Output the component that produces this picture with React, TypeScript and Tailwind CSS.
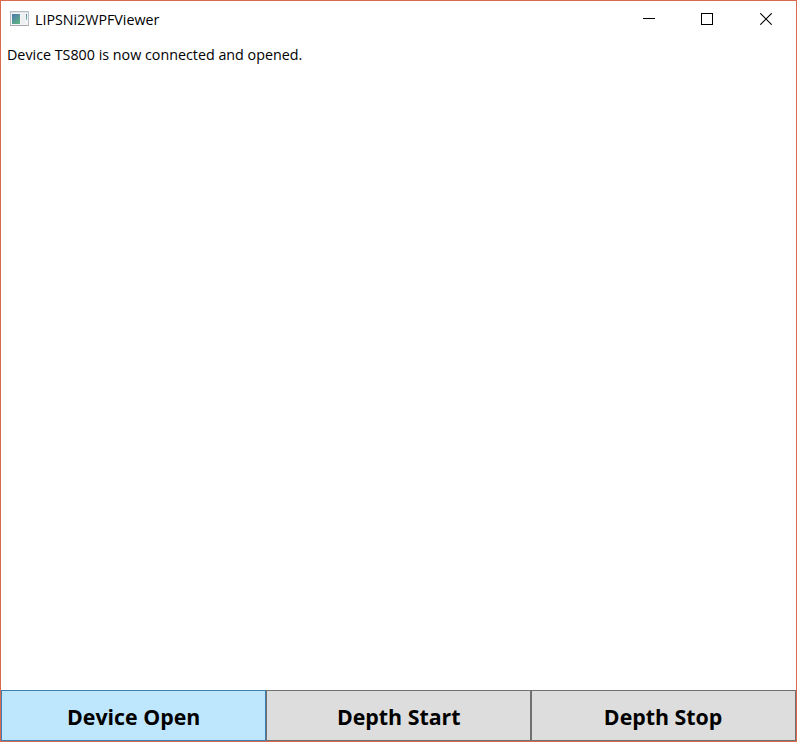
function AppIcon() {
  return (
    <svg width="19" height="16" viewBox="0 0 19 16" shapeRendering="crispEdges" aria-hidden="true">
      <defs>
        <linearGradient id="pane" x1="0" y1="0" x2="0.6" y2="1">
          <stop offset="0" stopColor="#4a78b0" />
          <stop offset="1" stopColor="#5fae86" />
        </linearGradient>
        <linearGradient id="bar" x1="0" y1="0" x2="0" y2="1">
          <stop offset="0" stopColor="#4a78b0" />
          <stop offset="1" stopColor="#7fbf9c" />
        </linearGradient>
      </defs>
      <rect x="0.5" y="0.5" width="18" height="14" fill="#f4f5f6" stroke="#b9bec4" />
      <rect x="0" y="14" width="19" height="1" fill="#a6a9ad" />
      <rect x="1" y="1" width="17" height="1" fill="#dfe2e6" />
      <rect x="2" y="3" width="8" height="10" fill="url(#pane)" />
      <rect x="11" y="3" width="4" height="10" fill="#eceeef" />
      <rect x="16" y="3" width="1" height="6" fill="url(#bar)" />
    </svg>
  );
}

function TitleBar() {
  return (
    <header className="flex h-[36px] items-center justify-between pl-[9px] pr-[24px]">
      <div className="flex items-center gap-[6px]">
        <AppIcon />
        <h1 className="origin-left scale-x-[0.95] whitespace-nowrap text-[15px] leading-5">LIPSNi2WPFViewer</h1>
      </div>
      <div className="flex items-center">
        <button aria-label="Minimize" className="mr-[46px]">
          <svg className="block" width="12" height="12" shapeRendering="crispEdges">
            <rect y="5" width="12" height="1" />
          </svg>
        </button>
        <button aria-label="Maximize" className="mr-[47px]">
          <svg className="block" width="12" height="12" shapeRendering="crispEdges">
            <rect x="0.5" y="0.5" width="11" height="11" fill="none" stroke="black" />
          </svg>
        </button>
        <button aria-label="Close">
          <svg className="block" width="12" height="12">
            <path d="M0.3 0.3 11.7 11.7M11.7 0.3 0.3 11.7" stroke="black" strokeWidth="1.1" />
          </svg>
        </button>
      </div>
    </header>
  );
}

const actions = [
  { label: "Device Open", tone: "border-[#3c7fb1] bg-[#bee6fd]" },
  { label: "Depth Start", tone: "border-[#707070] bg-[#dddddd]" },
  { label: "Depth Stop", tone: "border-[#707070] bg-[#dddddd]" },
];

export default function App() {
  return (
    <div className="flex h-[742px] w-[797px] flex-col border border-[#d9694f] bg-white font-['Open_Sans',sans-serif] text-black">
      <TitleBar />
      <main className="flex-1 pl-[6px] pt-[7px]">
        <p className="w-max origin-left scale-x-[0.953] whitespace-nowrap text-[15px] leading-5">
          Device TS800 is now connected and opened.
        </p>
      </main>
      <footer className="grid h-[51px] grid-cols-3">
        {actions.map((a) => (
          <button key={a.label} className={`border text-[22px] font-bold leading-[30px] ${a.tone}`}>
            <span className="inline-block scale-x-[0.97]">{a.label}</span>
          </button>
        ))}
      </footer>
    </div>
  );
}
